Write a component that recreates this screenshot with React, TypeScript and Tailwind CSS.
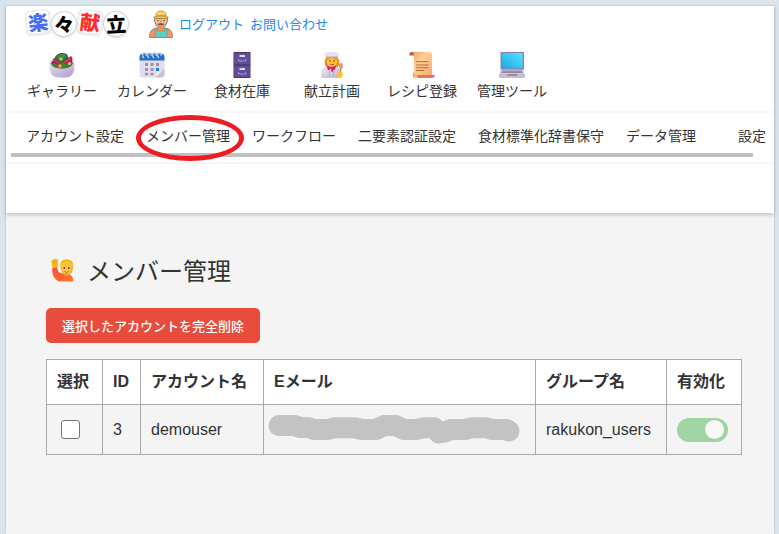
import type { ReactNode } from "react";

const jpFont = "font-['Noto_Sans_CJK_JP',sans-serif]";
const mixedFont = "font-['Liberation_Sans','Noto_Sans_CJK_JP',sans-serif]";

interface MenuItem {
  label: string;
  icon: ReactNode;
}

interface Member {
  id: number;
  account: string;
  group: string;
  enabled: boolean;
}

function SaladIcon() {
  return (
    <svg viewBox="0 0 26 26" className="size-[26px]" aria-hidden="true">
      <defs>
        <linearGradient id="bowl" x1="0" y1="0" x2="1" y2="1">
          <stop offset="0" stopColor="#e4dcee" />
          <stop offset="1" stopColor="#ab9bc9" />
        </linearGradient>
      </defs>
      <path d="M.5 12c0 6 1 10 4 12 2 2 15 2 17 0 3-2 4-6 4-12z" fill="url(#bowl)" />
      <ellipse cx="13" cy="11" rx="12.500" ry="6" fill="#d9d0e6" />
      <ellipse cx="13" cy="11.500" rx="10.800" ry="4.800" fill="#5b3a60" />
      <path d="M5 8c1-5 5-7.500 9-7 4 0 6 3 5.500 6l-1 5H6z" fill="#35703c" />
      <path d="M8 6c1-4 6-5 9-3l-2 4-5 1z" fill="#468a49" />
      <path d="M3 12c3-3 8-1 10-1s6-2 10 0c0 4-4 5.500-10 5.500S3 15 3 12z" fill="#3f7f3c" />
      <path d="M4 6.500c4 0 7 3 8.500 6.500-4 0-8.500-1-8.500-6.500z" fill="#c5174f" />
      <path d="M5.500 8.500c2 0 4 2 5 4" stroke="#e8487a" fill="none" />
      <path d="M14 10.500l8-6.500c2 2 2 5-.5 7-2 1-5 1-7.500-.5z" fill="#b81c57" />
      <path d="M15 10.500l7-4" stroke="#ef4b7e" />
      <circle cx="12" cy="7" r="1.600" fill="#f6c637" />
      <circle cx="11" cy="14" r="1.700" fill="#f2b92b" />
      <circle cx="20.500" cy="11.500" r="1.600" fill="#f4c33a" />
    </svg>
  );
}

function CalendarIcon() {
  return (
    <svg viewBox="0 0 26 26" className="size-[26px]" aria-hidden="true">
      <rect x="0.500" y="2" width="25" height="23.500" rx="3.500" fill="#e2dcec" />
      <path d="M.5 8.500V5.500A4 4 0 0 1 4.500 1.500h17a4 4 0 0 1 4 4v3z" fill="#2670bd" />
      <g fill="none" stroke="#ced7e5" strokeWidth="1.200">
        <path d="M5 6C2.500 4 3.500.7 5.500.7S7.500 3 6.800 4" />
        <path d="M10 6C7.500 4 8.500.7 10.500.7s2 2.300 1.300 3.300" />
        <path d="M15 6c-2.500-2-1.500-5.300.5-5.300s2 2.300 1.300 3.300" />
        <path d="M20 6c-2.500-2-1.500-5.300.5-5.300s2 2.300 1.300 3.300" />
      </g>
      <g fill="#9a93a8">
        <rect x="6" y="11" width="3" height="3" />
        <rect x="11.500" y="11" width="3" height="3" />
        <rect x="17" y="11" width="3" height="3" />
        <rect x="6" y="16" width="3" height="3" />
        <rect x="11.500" y="16" width="3" height="3" />
        <rect x="6" y="20.800" width="3" height="2.500" />
        <rect x="11.500" y="20.800" width="3" height="2.500" />
      </g>
      <rect x="17" y="16" width="3" height="3" fill="#1683e4" />
      <path d="M25.500 17v5a3.500 3.500 0 0 1-3.500 3.500h-6l2-4z" fill="#c9bfda" />
      <path d="M25.500 17L16 25.500l2-5.500c3 0 6-1 7.500-3z" fill="#f1edf7" />
    </svg>
  );
}

function CabinetIcon() {
  return (
    <svg viewBox="0 0 26 26" className="size-[26px]" aria-hidden="true">
      <defs>
        <linearGradient id="drawer" x1="0" y1="0" x2="1" y2="1">
          <stop offset="0" stopColor="#6d4b93" />
          <stop offset="1" stopColor="#5552a0" />
        </linearGradient>
      </defs>
      <rect x="4.500" y="0" width="17" height="26" rx="0.800" fill="#453064" />
      <rect x="5.200" y="0.800" width="15.600" height="11.700" fill="url(#drawer)" />
      <rect x="5.200" y="13.700" width="15.600" height="11.500" fill="url(#drawer)" />
      <g fill="#dcd7ea">
        <rect x="10.500" y="3" width="5.500" height="2" />
        <rect x="10.500" y="16" width="5.500" height="2" />
      </g>
      <g fill="none" stroke="#a79bc8" strokeWidth="1">
        <path d="M9.700 7v2h7V7" />
        <path d="M9.700 20v2h7v-2" />
      </g>
    </svg>
  );
}

function ChefIcon() {
  return (
    <svg viewBox="0 0 26 26" className="size-[26px]" aria-hidden="true">
      <defs>
        <linearGradient id="coat" x1="0" y1="0" x2="1" y2="1">
          <stop offset="0" stopColor="#f1ebf6" />
          <stop offset="1" stopColor="#bdb0d0" />
        </linearGradient>
      </defs>
      <path d="M6 13c-1-7 1-9 7-9s8 3 7 9l-2 3H8z" fill="#ee8b1d" />
      <path d="M2 26c0-8 1-11 6-12h8c5 1 6 4 6 12z" fill="url(#coat)" />
      <ellipse cx="13" cy="9.500" rx="5.200" ry="5.300" fill="#ffc738" />
      <path d="M7.500 8c2 0 4-1 5-3 1 2 3 3 6 3l-1-4H8z" fill="#f59b22" />
      <path d="M6.500 5C4.500 3 6 0 8.500.6 10-.4 16-.4 17.500.6 20 0 21 3 19 5z" fill="#e7e0f0" />
      <path d="M6.800 4.800h12.400" stroke="#b8abc9" strokeWidth="0.800" />
      <circle cx="11" cy="9" r=".8" fill="#573146" />
      <circle cx="15" cy="9" r=".8" fill="#573146" />
      <path d="M11 12c1 1 3 1 4 0" stroke="#c62935" fill="none" strokeWidth=".9" />
      <path d="M7.500 13.500l5 1.500 5-1.500-2 5-3-2-3.500 2z" fill="#d42a5c" />
      <path d="M13 15.500l-1 3.500 2 1 .5-4z" fill="#b91f53" />
      <g fill="#8c7ca3">
        <circle cx="10.500" cy="20" r=".6" />
        <circle cx="14.500" cy="20" r=".6" />
        <circle cx="10.500" cy="23" r=".6" />
        <circle cx="14.500" cy="23" r=".6" />
      </g>
      <path d="M22 15l-1 9" stroke="#c07b52" strokeWidth="1.400" />
      <ellipse cx="22" cy="14" rx="1.900" ry="3" fill="#dd976c" />
      <path d="M18.500 21c1-2 4-2 5 0 .5 2 0 4-2 5h-3z" fill="#ffc21f" />
    </svg>
  );
}

function ScrollIcon() {
  return (
    <svg viewBox="0 0 26 26" className="size-[26px]" aria-hidden="true">
      <defs>
        <linearGradient id="paper" x1="0" y1="0" x2="1" y2="1">
          <stop offset="0" stopColor="#f0a063" />
          <stop offset=".4" stopColor="#ffd195" />
          <stop offset="1" stopColor="#f8ad70" />
        </linearGradient>
      </defs>
      <path d="M2.500 0H20c2 0 3 1 3 3v20H5V4z" fill="url(#paper)" />
      <path d="M2.500 0C.3 0 0 2 .5 3.500H5C5 2 5 0 2.500 0z" fill="#b9614b" />
      <path d="M5 23v-3l-1 2v3c0 1 1 1 2 1h17c2 0 3-1 2.700-3z" fill="#e1785d" />
      <path d="M4 22c0 2 1 1.500 2 1.500l2-.5 1 3H6c-2 0-2.500-2-2-4z" fill="#ffbd84" />
      <path d="M7 9.700h12.500M7 13h12.500M7 15.700h12.500M7 18.500h8" stroke="#b96b45" strokeWidth="1" />
    </svg>
  );
}

function LaptopIcon() {
  return (
    <svg viewBox="0 0 26 26" className="size-[26px]" aria-hidden="true">
      <defs>
        <linearGradient id="screen" x1="0" y1="1" x2="1" y2="0">
          <stop offset="0" stopColor="#1fa8e4" />
          <stop offset="1" stopColor="#55e4ff" />
        </linearGradient>
      </defs>
      <rect x="1.500" y="0" width="23.500" height="18" rx="1" fill="#8b80ae" />
      <rect x="2.700" y="1" width="21" height="15.300" fill="url(#screen)" />
      <path d="M2 17.500h22l2 5H0z" fill="#d0c9dd" />
      <path d="M3.500 18.500h19l1 2.500h-21z" fill="#8d849f" />
      <path d="M3.500 19.700h19" stroke="#b8b0c6" strokeWidth=".6" strokeDasharray="1.500 .6" />
      <path d="M0 22h26v3.200c0 .5-.5.800-1 .8H1c-.5 0-1-.3-1-.8z" fill="#c5bdd3" />
      <path d="M8.500 22.200h9.500v1.500H8.500z" fill="#817794" />
    </svg>
  );
}

function FarmerIcon() {
  return (
    <svg viewBox="0 0 24 28" className="h-7 w-6" aria-hidden="true">
      <path d="M.5 27.500c0-6 2-8.500 7-9.500h9c5 1 7 3.500 7 9.500z" fill="#f6935e" stroke="#8f6548" strokeWidth=".7" />
      <path d="M6 8h12l.8 2.500c0 1-.4 1.500-1 1.800C17.500 15.500 15 18 12 18s-5.500-2.500-5.800-5.700c-.6-.3-1-.8-1-1.800z" fill="#f0bd96" stroke="#755846" strokeWidth=".8" />
      <path d="M6 18.500h2.500V21h7v-2.500H18v9H6z" fill="#65c9c3" stroke="#438e92" strokeWidth=".5" />
      <path d="M9.200 15.500h5.600v5c-1.500 1.300-4.100 1.300-5.600 0z" fill="#f28e52" />
      <path d="M8.500 14c1 0 2.200-1 3.500-1s2.500 1 3.500 1c-.5 1.500-2 1.500-3.500 1-1.500.5-3 .5-3.500-1z" fill="#7c5949" />
      <path d="M12 10v2.500" stroke="#c98a68" strokeWidth="1" />
      <path d="M8 11c.5-.7 1.500-.7 2 0M14 11c.5-.7 1.500-.7 2 0" stroke="#473d38" strokeWidth=".8" fill="none" />
      <path d="M7 6c0-4 2-5 5-5s5 1 5 5z" fill="#ffd65a" stroke="#9c7b33" strokeWidth=".7" />
      <path d="M7 5h10v1.500H7z" fill="#e8a735" />
      <ellipse cx="12" cy="7.300" rx="7.500" ry="1.300" fill="#f7ca40" stroke="#8a713c" strokeWidth=".6" />
    </svg>
  );
}

function RaisedHandIcon() {
  return (
    <svg viewBox="0 0 24 24" className="size-6" aria-hidden="true">
      <defs>
        <linearGradient id="shirt" x1="0" y1="0" x2="1" y2="1">
          <stop offset="0" stopColor="#ff4b38" />
          <stop offset="1" stopColor="#ff7a2e" />
        </linearGradient>
      </defs>
      <path d="M1.500 9.500l4.500-.5 1.500 5c3 2 9 1.500 12 3 2 1.500 3 3.500 3 6.500H8C2.500 21 .5 15 1.500 9.500z" fill="url(#shirt)" />
      <path d="M1.500 9C.3 6 .3 4 1 2c.6-1 1.300-.6 1.500 0C3 0 4.500 0 4.800 1.500 6 .5 7 1 7 3c0 2 1 4-.5 6.500z" fill="#f8b91f" />
      <path d="M2.500 2.500l.5 3M4.700 2.500v3" stroke="#d98b22" strokeWidth=".6" />
      <path d="M9.500 9c-1-4 1-7.500 6-7.500s7.500 3 6.500 7.500c0 3-1 6-3 7h-6c-2-1-3.500-4-3.500-7z" fill="#f5ac22" />
      <ellipse cx="15.600" cy="10.300" rx="5" ry="5.500" fill="#ffc740" />
      <path d="M9.500 8c4 0 5-1 6.500-3 1 2 3 3 6 3-1-6-12-7-12.500 0z" fill="#f9c42e" />
      <circle cx="13.300" cy="10" r=".9" fill="#5a3345" />
      <circle cx="17.800" cy="10" r=".9" fill="#5a3345" />
      <path d="M13.500 13.500c1 1 3 1 4 0" fill="none" stroke="#a63d31" strokeWidth=".9" />
      <path d="M13 15.500c2 1 4 1 5.500 0l.5 1.500c-2 1.300-4.500 1.300-6.500 0z" fill="#ed9a23" />
    </svg>
  );
}

const mainMenu: MenuItem[] = [
  { label: "ギャラリー", icon: <SaladIcon /> },
  { label: "カレンダー", icon: <CalendarIcon /> },
  { label: "食材在庫", icon: <CabinetIcon /> },
  { label: "献立計画", icon: <ChefIcon /> },
  { label: "レシピ登録", icon: <ScrollIcon /> },
  { label: "管理ツール", icon: <LaptopIcon /> },
];

const subMenu = [
  "アカウント設定",
  "メンバー管理",
  "ワークフロー",
  "二要素認証設定",
  "食材標準化辞書保守",
  "データ管理",
  "設定",
];

const members: Member[] = [
  { id: 3, account: "demouser", group: "rakukon_users", enabled: true },
];

function Logo() {
  return (
    <a href="#" className="flex items-center gap-px text-[20px] leading-none font-black" aria-label="楽々献立">
      <span className="mb-1 flex size-6 -rotate-6 items-center justify-center rounded-sm border border-gray-200 text-[#4a6cf7] shadow-sm">
        楽
      </span>
      <span className="flex size-[26px] rotate-6 items-center justify-center rounded-full border border-gray-300 text-black shadow-sm">
        々
      </span>
      <span className="mb-1 flex size-6 rotate-6 items-center justify-center rounded-sm border border-gray-200 text-[#ff2b2b] shadow-sm">
        献
      </span>
      <span className="flex size-[26px] -rotate-3 items-center justify-center rounded-full border border-gray-300 text-black shadow-sm">
        立
      </span>
    </a>
  );
}

// 伏せ字にしたメールアドレス
function MaskedEmail() {
  return (
    <svg viewBox="0 0 252 29" className="h-[29px] w-[252px]" role="img" aria-label="非表示">
      <path
        d="M11 10.500H27L32 12.500H40L46 14.500H60L66 12.800H87L94 14.500H108L116 10.600H128L136 14.500H148L156 12.700H166L171 18 177 17 183 14.500H197L204 12.700H218L224 14.500H238L241 16"
        fill="none"
        stroke="#c3c3c3"
        strokeWidth="21"
        strokeLinecap="round"
        strokeLinejoin="round"
      />
    </svg>
  );
}

function Header() {
  return (
    <header className="relative bg-white shadow-[0_2px_4px_rgba(0,0,0,0.2)]">
      <div className="flex h-9 items-center pl-5">
        <Logo />
        <div className="ml-5 flex items-center gap-[6px] text-[13px] text-[#1e88ee]">
          <FarmerIcon />
          <a href="#">ログアウト</a>
          <a href="#">お問い合わせ</a>
        </div>
      </div>

      <nav className="flex h-[69px] pt-[10px] pl-[11px]">
        {mainMenu.map((item) => (
          <a key={item.label} href="#" className="flex w-[90px] flex-col items-center text-[14px] leading-6 whitespace-nowrap">
            {item.icon}
            {item.label}
          </a>
        ))}
      </nav>

      <nav className="h-[51px] border-t-2 border-[#f9f9f9] pl-[5px]">
        <div className="flex h-10 items-center gap-[22px] pt-1 pl-[15px] text-[14px] whitespace-nowrap">
          {subMenu.map((label) => (
            <a key={label} href="#" className="relative last:ml-5">
              {label}
              {label === "メンバー管理" && (
                <span className="absolute -top-[10px] -left-[10px] z-10 h-[46px] w-[108px] rounded-[50%] border-[5px] border-[#ed1c24]" />
              )}
            </a>
          ))}
        </div>
        <div className="mr-[21px] h-1 bg-[#c0c0c0]" />
      </nav>

      <div className="h-[51px] border-t-2 border-[#f6f6f6]" />
    </header>
  );
}

function MemberTable() {
  return (
    <table className={`w-full table-fixed border-collapse border border-[#aaa] text-left text-[16px] ${mixedFont}`}>
      <colgroup>
        <col className="w-14" />
        <col className="w-[38px]" />
        <col className="w-[123px]" />
        <col />
        <col className="w-[131px]" />
        <col className="w-[75px]" />
      </colgroup>
      <thead>
        <tr className="h-[45px] bg-white whitespace-nowrap">
          {["選択", "ID", "アカウント名", "Eメール", "グループ名", "有効化"].map((title) => (
            <th key={title} className="border border-[#aaa] px-[10px] font-bold">
              {title}
            </th>
          ))}
        </tr>
      </thead>
      <tbody>
        {members.map((member) => (
          <tr key={member.id} className="h-[50px]">
            <td className="border border-[#aaa] px-[10px]">
              <input
                type="checkbox"
                aria-label={`${member.account}を選択`}
                className="ml-1 block size-[19px] appearance-none rounded-[3px] border border-[#767676] bg-white"
              />
            </td>
            <td className="border border-[#aaa] px-[10px]">{member.id}</td>
            <td className="border border-[#aaa] px-[10px]">{member.account}</td>
            <td className="border border-[#aaa] px-1">
              <MaskedEmail />
            </td>
            <td className="border border-[#aaa] px-[10px]">{member.group}</td>
            <td className="border border-[#aaa] px-[10px]">
              <input
                type="checkbox"
                role="switch"
                defaultChecked={member.enabled}
                aria-label={`${member.account}を有効化`}
                className="flex h-6 w-[51px] appearance-none items-center rounded-full bg-gray-300 px-1 before:size-[19px] before:rounded-full before:bg-[#f8f8f8] checked:justify-end checked:bg-[#a1d4a3]"
              />
            </td>
          </tr>
        ))}
      </tbody>
    </table>
  );
}

export default function App() {
  return (
    <div className={`min-h-screen bg-[#dae5eb] pt-[6px] pr-[5px] pl-[6px] text-[#333] ${jpFont}`}>
      <div className="flex min-h-[calc(100vh-6px)] flex-col bg-[#f4f4f4] shadow-[0_0_2px_rgba(0,0,0,0.2)]">
        <Header />
        <main className="pt-[39px] pr-8 pb-10 pl-10">
          <h1 className="flex items-center gap-3 pl-[5px] text-[24px] leading-9">
            <RaisedHandIcon />
            メンバー管理
          </h1>
          <button
            type="button"
            className="mt-5 mb-4 block h-[35px] rounded-[5px] bg-[#e74c3c] px-4 text-[13px] font-medium text-white"
          >
            選択したアカウントを完全削除
          </button>
          <MemberTable />
        </main>
      </div>
    </div>
  );
}
